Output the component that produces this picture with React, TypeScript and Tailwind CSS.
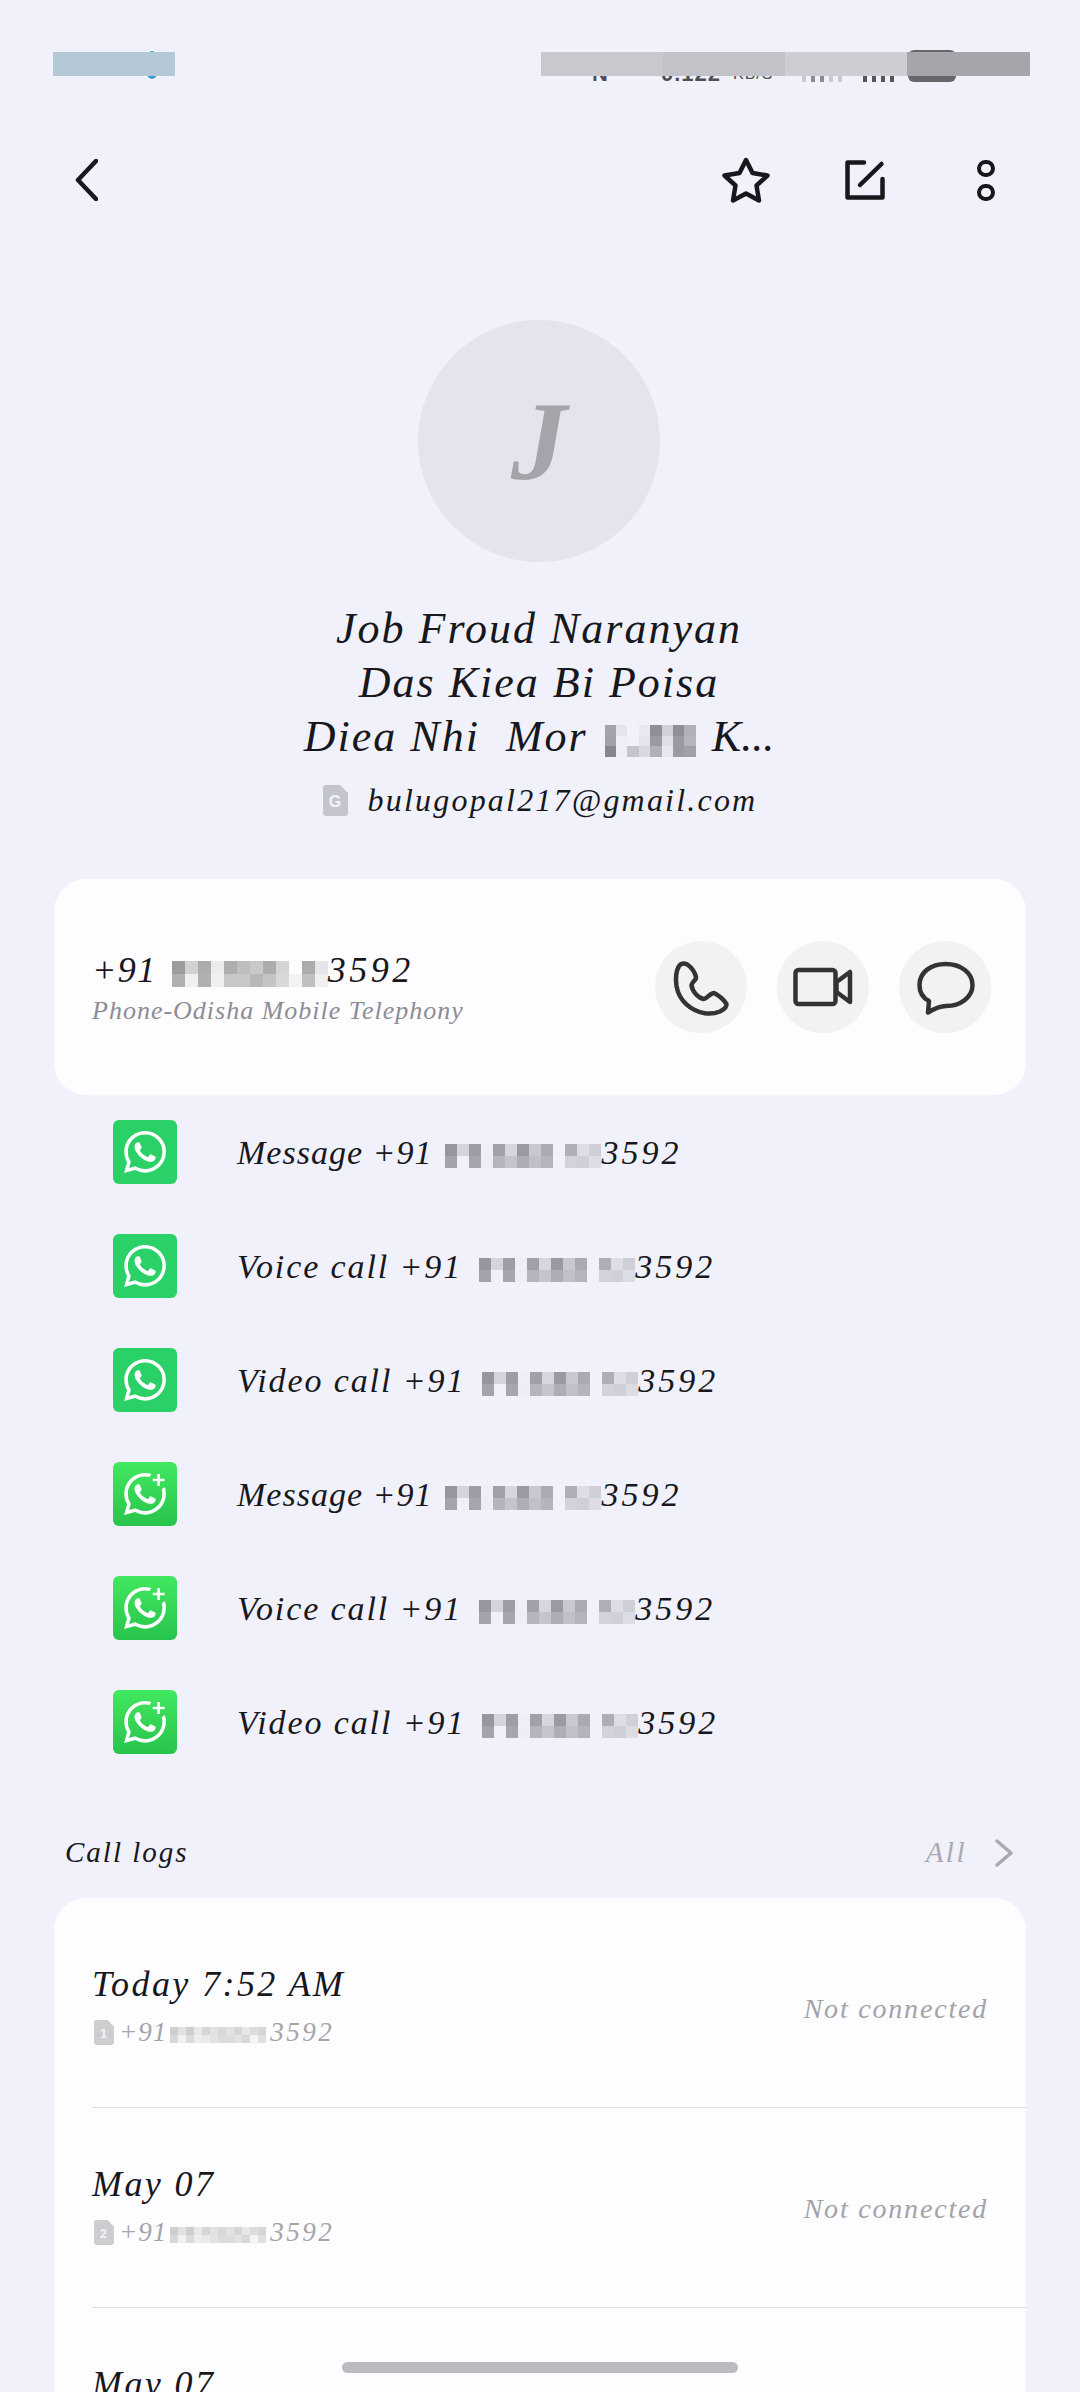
import { SiWhatsapp } from 'react-icons/si';

const nameCells = [
  ['#a3a3ab', '#e4e4ec', '#f0f1fa', '#e8e8f0', '#8f8f98', '#d0d0da', '#8f8f98', '#b0b0b8'],
  ['#a0a0a8', '#eeeef6', '#f0f1fa', '#e4e4ec', '#9a9aa2', '#dedee6', '#9a9aa2', '#b4b4bc'],
  ['#85858e', '#eeeef6', '#c4c4cc', '#d8d8e0', '#b0b0b8', '#e8e8f0', '#9a9aa2', '#a0a0a8'],
];

const cardCells = [
  ['#9c9c9f', '#d2d2d4', '#acacaf', '#ececee', '#aeaeb0', '#bebec0', '#c9c9cb', '#acacaf', '#d4d4d6', '#fdfcff', '#acacaf', '#e6e6e8'],
  ['#b0b0b3', '#f0f0f2', '#b0b0b3', '#f0f0f2', '#c8c8ca', '#c8c8ca', '#b8b8bb', '#c4c4c6', '#d8d8da', '#f2f2f4', '#c0c0c3', '#f0f0f2'],
];

const rowCells = [
  ['#96969e', '#d4d4de', '#9d9da5', '#eeeef6', '#a0a0a8', '#d6d6e0', '#9a9aa4', '#c8c8d2', '#aaaab2', '#f0f1fa', '#aeaeb6', '#dddde6', '#cfcfd8'],
  ['#a3a3ab', '#f0f0f8', '#a5a5ad', '#ecedf5', '#b4b4bc', '#c4c4cc', '#adadb5', '#c0c0c8', '#b4b4bc', '#f0f1fa', '#d2d2dc', '#cfcfd8', '#dcdce4'],
];

const logCells = [
  ['#cfcfd1', '#e2e2e4', '#cfcfd1', '#e8e8ea', '#d6d6d8', '#e2e2e4', '#d8d8da', '#e2e2e4', '#d6d6d8', '#e8e8ea', '#dcdcde', '#d6d6d8'],
  ['#d8d8da', '#f2f2f4', '#dcdcde', '#eeeef0', '#eaeaec', '#e2e2e4', '#dcdcde', '#dcdcde', '#e2e2e4', '#d8d8da', '#f4f4f6', '#e0e0e2'],
];

function Mosaic({ cells, size, height }: { cells: string[][]; size: number; height?: number }) {
  return (
    <span className="inline-flex flex-col shrink-0 align-middle">
      {cells.map((row, i) => (
        <span key={i} className="flex">
          {row.map((c, j) => (
            <span key={j} style={{ width: size, height: height ?? size, backgroundColor: c }} />
          ))}
        </span>
      ))}
    </span>
  );
}

function SimIcon({ label, className }: { label: string; className: string }) {
  return (
    <svg viewBox="0 0 25 31" className={className}>
      <path d="M3 0H17L25 8V28a3 3 0 0 1-3 3H3a3 3 0 0 1-3-3V3a3 3 0 0 1 3-3Z" fill="currentColor" />
      <text x="12" y="22" textAnchor="middle" fontSize="16" fontWeight="700" fontStyle="normal" fill="#f4f4f8" fontFamily="Liberation Sans, sans-serif">
        {label}
      </text>
    </svg>
  );
}

const whatsappPath =
  'M17.472 14.382c-.297-.149-1.758-.867-2.03-.967-.273-.099-.471-.148-.67.15-.197.297-.767.966-.94 1.164-.173.199-.347.223-.644.075-.297-.15-1.255-.463-2.39-1.475-.883-.788-1.48-1.761-1.653-2.059-.173-.297-.018-.458.13-.606.134-.133.298-.347.446-.52.149-.174.198-.298.298-.497.099-.198.05-.371-.025-.52-.075-.149-.669-1.612-.916-2.207-.242-.579-.487-.5-.669-.51-.173-.008-.371-.01-.57-.01-.198 0-.52.074-.792.372-.272.297-1.04 1.016-1.04 2.479 0 1.462 1.065 2.875 1.213 3.074.149.198 2.096 3.2 5.077 4.487.709.306 1.262.489 1.694.625.712.227 1.36.195 1.871.118.571-.085 1.758-.719 2.006-1.413.248-.694.248-1.289.173-1.413-.074-.124-.272-.198-.57-.347m-5.421 7.403h-.004a9.87 9.87 0 01-5.031-1.378l-.361-.214-3.741.982.998-3.648-.235-.374a9.86 9.86 0 01-1.51-5.26c.001-5.45 4.436-9.884 9.888-9.884 2.64 0 5.122 1.03 6.988 2.898a9.825 9.825 0 012.893 6.994c-.003 5.45-4.437 9.884-9.885 9.884m8.413-18.297A11.815 11.815 0 0012.05 0C5.495 0 .16 5.335.157 11.892c0 2.096.547 4.142 1.588 5.945L.057 24l6.305-1.654a11.882 11.882 0 005.683 1.448h.005c6.554 0 11.89-5.335 11.893-11.893a11.821 11.821 0 00-3.48-8.413z';

function BusinessLogo({ id }: { id: string }) {
  return (
    <svg viewBox="0 0 24 24" className="w-[42px] h-[42px] overflow-visible">
      <mask id={id} maskUnits="userSpaceOnUse" x="-2" y="-2" width="28" height="28">
        <rect x="-2" y="-2" width="28" height="28" fill="white" />
        <circle cx="19.8" cy="4" r="5.4" fill="black" />
      </mask>
      <path d={whatsappPath} fill="white" mask={`url(#${id})`} />
      <path d="M19.8 0.6V7.4M16.4 4H23.2" stroke="white" strokeWidth="1.5" />
    </svg>
  );
}

const rows = [
  { label: 'Message +91', biz: false, text: 'tracking-[1px]', gap: 'ml-[13px]' },
  { label: 'Voice call +91', biz: false, text: 'tracking-[1.9px]', gap: 'ml-[17px]' },
  { label: 'Video call +91', biz: false, text: 'tracking-[1.9px]', gap: 'ml-[17px]' },
  { label: 'Message +91', biz: true, text: 'tracking-[1px]', gap: 'ml-[13px]' },
  { label: 'Voice call +91', biz: true, text: 'tracking-[1.9px]', gap: 'ml-[17px]' },
  { label: 'Video call +91', biz: true, text: 'tracking-[1.9px]', gap: 'ml-[17px]' },
];

const logs = [
  { title: 'Today 7:52 AM', sim: '1' },
  { title: 'May 07', sim: '2' },
  { title: 'May 07', sim: '1' },
];

export default function App() {
  return (
    <div className="relative w-[1080px] h-[2392px] overflow-hidden bg-[#f0f1fa] text-[#17171c] italic font-['Liberation_Serif',serif]">
      {/* Status bar, redacted */}
      <div className="relative h-[24px] mt-[52px]">
        <div className="absolute left-[908px] top-[-2px] w-[48px] h-[32px] rounded-[6px] bg-[#66666b]" />
        <div className="absolute left-[142px] top-[-2px] w-[20px] h-[30px] rounded-full bg-white" />
        <div className="absolute left-[147px] top-[-1px] w-[10px] h-[28px] rounded-full bg-[#3f9bd0]" />
        <div className="absolute left-[592px] top-[7px] h-[30px] flex items-end not-italic font-bold text-[22px] leading-[30px] tracking-[1px] text-[#4e4e54] font-['Liberation_Sans',sans-serif]">
          <span>N</span>
          <span className="ml-[52px]">0.122</span>
          <span className="ml-[12px] text-[16px] font-normal">KB/S</span>
        </div>
        <div className="absolute left-[802px] top-[24px] flex gap-[5px]">
          <div className="w-[4px] h-[6px] bg-[#c9c9cf]" />
          <div className="w-[4px] h-[6px] bg-[#8b8b91]" />
          <div className="w-[4px] h-[6px] bg-[#8b8b91]" />
          <div className="w-[4px] h-[6px] bg-[#c9c9cf]" />
          <div className="w-[4px] h-[6px] bg-[#c9c9cf]" />
          <div className="w-[4px] h-[6px] ml-[16px] bg-[#55555a]" />
          <div className="w-[4px] h-[6px] bg-[#55555a]" />
          <div className="w-[4px] h-[6px] bg-[#55555a]" />
          <div className="w-[4px] h-[6px] bg-[#55555a]" />
        </div>
        <div className="relative flex h-[24px] pl-[53px]">
          <div className="w-[122px] bg-[#b5c8d6]" />
          <div className="ml-[366px] w-[122px] bg-[#c8c8ce]" />
          <div className="w-[122px] bg-[#c2c2c8]" />
          <div className="w-[122px] bg-[#cdcdd4]" />
          <div className="w-[123px] bg-[#a5a5ab]" />
        </div>
      </div>

      {/* Toolbar */}
      <div className="flex items-center h-[80px] mt-[64px] pl-[74px] pr-[85px]">
        <svg viewBox="0 0 24 42" className="w-[24px] h-[42px]" fill="none" stroke="#17171c" strokeWidth="4.5" strokeLinecap="round" strokeLinejoin="round">
          <path d="M22 2L4 21L22 40" />
        </svg>
        <svg viewBox="0 0 48 46" className="w-[48px] h-[46px] ml-auto" fill="none" stroke="#17171c" strokeWidth="4.5" strokeLinejoin="round">
          <path d="M24 3L30.5 16L45.5 18.5L34.5 28.5L37 43.5L24 36.5L11 43.5L13.5 28.5L2.5 18.5L17.5 16Z" />
        </svg>
        <svg viewBox="0 0 40 40" className="w-[40px] h-[40px] ml-[75px]" fill="none" stroke="#17171c" strokeWidth="4.5" strokeLinecap="round" strokeLinejoin="round">
          <path d="M19 2.5H2.5V37.5H37.5V19" />
          <path d="M36.5 4L15 25" />
        </svg>
        <div className="flex flex-col gap-[7px] ml-[92px]">
          <div className="w-[18px] h-[17px] rounded-full border-[4px] border-[#17171c]" />
          <div className="w-[18px] h-[17px] rounded-full border-[4px] border-[#17171c]" />
        </div>
      </div>

      {/* Avatar and name */}
      <div className="flex flex-col items-center pr-[2px]">
        <div className="flex items-center justify-center w-[242px] h-[242px] mt-[100px] rounded-full bg-[#e3e4ec] text-[#a4a4ab] text-[112px] leading-none font-bold">
          J
        </div>
        <div className="flex flex-col items-center mt-[40px] text-[44px] leading-[54px] tracking-[2px]">
          <div>Job Froud Naranyan</div>
          <div>Das Kiea Bi Poisa</div>
          <div className="flex items-center">
            Diea Nhi&nbsp; Mor
            <span className="ml-[17px] mr-[16px]">
              <Mosaic cells={nameCells} size={11.4} height={10.7} />
            </span>
            <span className="tracking-[0px]">K...</span>
          </div>
        </div>
        <div className="flex items-center h-[40px] mt-[16px] pl-[2px]">
          <SimIcon label="G" className="w-[25px] h-[31px] text-[#c4c4cc]" />
          <span className="ml-[20px] text-[32px] tracking-[2.2px]">bulugopal217@gmail.com</span>
        </div>
      </div>

      {/* Phone card */}
      <div className="flex items-center justify-between h-[216px] mx-[54px] mt-[59px] pl-[38px] pr-[35px] rounded-[32px] bg-[#fdfcff]">
        <div>
          <div className="flex items-center h-[44px] mt-[3px] text-[36px] tracking-[1.5px]">
            +91
            <span className="ml-[15px]">
              <Mosaic cells={cardCells} size={13} />
            </span>
            <span className="tracking-[3.5px]">3592</span>
          </div>
          <div className="mt-[1px] text-[26px] leading-[36px] tracking-[1px] text-[#8e8c94]">Phone-Odisha Mobile Telephony</div>
        </div>
        <div className="flex gap-[30px]">
          <div className="w-[92px] h-[92px] rounded-full bg-[#f2f1f3]">
            <svg viewBox="0 0 92 92" className="w-[92px] h-[92px]" fill="none" stroke="#333336" strokeWidth="4.5" strokeLinejoin="round">
              <path d="M24 25C26 22 30 21.5 33 24C37 27 40 32 41 36C41.5 39 37 41 36.5 44C37 50 43 57 48.5 58C52 58 55 52 59 52C63 54 69 59 71.5 63C72 67 68 69 65 70.5C60 72.5 55 73 50 72.3C36 70 24 60 21.5 45C20.5 38 21 30 24 25Z" />
            </svg>
          </div>
          <div className="w-[92px] h-[92px] rounded-full bg-[#f2f1f3]">
            <svg viewBox="0 0 92 92" className="w-[92px] h-[92px]" fill="none" stroke="#333336" strokeWidth="4.5" strokeLinejoin="round">
              <rect x="18.5" y="29" width="40" height="34" rx="3" />
              <path d="M59.5 41L73 31V61L59.5 51Z" />
            </svg>
          </div>
          <div className="w-[92px] h-[92px] rounded-full bg-[#f2f1f3]">
            <svg viewBox="0 0 92 92" className="w-[92px] h-[92px]" fill="none" stroke="#333336" strokeWidth="4.5" strokeLinejoin="round">
              <path d="M30 60C22 56 20.5 50 20.5 44C20.5 31 32 23 46.7 23C62 23 73.5 32 73.5 44C73.5 56 62 65 47 65C42 65 38 66 29 71.5Z" />
            </svg>
          </div>
        </div>
      </div>

      {/* WhatsApp actions */}
      <div className="flex flex-col">
        {rows.map((row, i) => (
          <div key={i} className="flex items-center h-[114px] pl-[113px] text-[34px]">
            <div className={`flex items-center justify-center w-[64px] h-[64px] rounded-[6px] ${row.biz ? 'bg-gradient-to-b from-[#41e85f] to-[#27c44c]' : 'bg-[#2ad167]'}`}>
              {row.biz ? <BusinessLogo id={`biz-${i}`} /> : <SiWhatsapp className="w-[42px] h-[42px] text-white" />}
            </div>
            <div className="flex items-center ml-[60px] pt-[1px]">
              <span className={row.text}>{row.label}</span>
              <span className={row.gap}>
                <Mosaic cells={rowCells} size={12} />
              </span>
              <span className="tracking-[3px]">3592</span>
            </div>
          </div>
        ))}
      </div>

      {/* Call logs header */}
      <div className="flex items-center justify-between h-[30px] mt-[59px] pl-[65px] pr-[67px]">
        <span className="text-[29px] tracking-[2px]">Call logs</span>
        <div className="flex items-center text-[#a8a8b0]">
          <span className="text-[29px] tracking-[2.5px]">All</span>
          <svg viewBox="0 0 18 28" className="w-[18px] h-[28px] ml-[28px]" fill="none" stroke="#a9a9b0" strokeWidth="3.5" strokeLinecap="round" strokeLinejoin="round">
            <path d="M2 2L16 14L2 26" />
          </svg>
        </div>
      </div>

      {/* Call log list */}
      <div className="mx-[54px] mt-[30px] pt-[10px] pl-[38px] rounded-t-[32px] bg-[#fdfcff]">
        {logs.map((log, i) => (
          <div key={i} className="flex items-center justify-between h-[200px] pr-[38px] border-b border-[#dedde2]">
            <div className="mb-[5px]">
              <div className="text-[36px] leading-[46px] tracking-[2.4px]">{log.title}</div>
              <div className="flex items-center h-[34px] mt-[8px] text-[27px] text-[#a5a4aa]">
                <SimIcon label={log.sim} className="w-[20px] h-[25px] ml-[2px] text-[#cdcdd0]" />
                <span className="ml-[5px] tracking-[1px]">+91</span>
                <span className="ml-[3px]">
                  <Mosaic cells={logCells} size={8} />
                </span>
                <span className="ml-[4px] tracking-[2.5px]">3592</span>
              </div>
            </div>
            <span className="pt-[2px] text-[28px] tracking-[1.8px] text-[#a3a2a8]">Not connected</span>
          </div>
        ))}
      </div>

      {/* Home indicator */}
      <div className="absolute left-[342px] top-[2362px] w-[396px] h-[11px] rounded-full bg-[#bcbbc0]" />
    </div>
  );
}
